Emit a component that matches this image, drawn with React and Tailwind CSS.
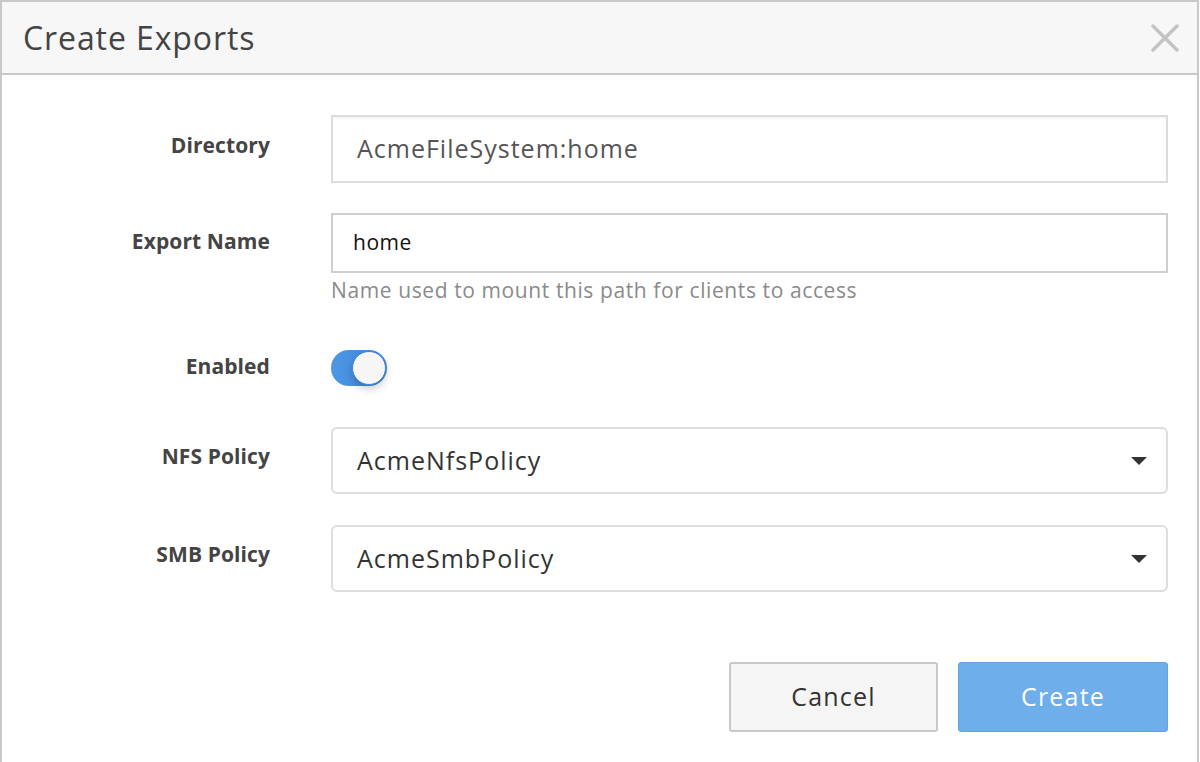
import { useState } from "react";

const font = { fontFamily: "'Open Sans', Lato, sans-serif" };

const Caret = () => (
  <svg width="16" height="8" viewBox="0 0 16 8" className="shrink-0">
    <path d="M0 0 H16 L8 8 Z" fill="#333" />
  </svg>
);

const Row = ({ label, labelClass = "", className = "", children }) => (
  <div className={`flex ${className}`}>
    <div
      className={`w-[268px] shrink-0 text-right text-[21px] leading-[24px] font-bold tracking-[0.1px] text-[#444] ${labelClass}`}
    >
      {label}
    </div>
    <div className="ml-[61px] w-[837px]">{children}</div>
  </div>
);

const App = () => {
  const [enabled, setEnabled] = useState(true);

  return (
    <div
      className="h-[762px] w-[1199px] overflow-hidden border-x-2 border-t-2 border-[#c8c8c8] bg-white"
      style={font}
    >
      <div className="flex h-[73px] items-center justify-between border-b-2 border-[#c8c8c8] bg-[#f7f7f7] pl-[21px] pr-[18px]">
        <h1 className="text-[32px] leading-none tracking-[0.9px] text-[#444]">
          Create Exports
        </h1>
        <button type="button" className="cursor-pointer">
          <svg width="28" height="28" viewBox="0 0 28 28">
            <path
              d="M2 2 L26 26 M26 2 L2 26"
              stroke="#c4c4c4"
              strokeWidth="3.5"
              strokeLinecap="round"
            />
          </svg>
        </button>
      </div>

      <div className="pt-[40px]">
        <Row label="Directory" labelClass="pt-[18px]">
          <div className="flex h-[68px] items-center border-2 border-[#dcdcdc] pl-[24px] text-[25px] tracking-[1px] text-[#555] shadow-[inset_0_2px_2px_rgba(0,0,0,0.04)]">
            AcmeFileSystem:home
          </div>
        </Row>

        <Row label="Export Name" labelClass="pt-[16px]" className="mt-[30px]">
          <div className="flex h-[60px] items-center border-2 border-[#cfcfcf] pl-[20px] text-[21px] tracking-[0.5px] text-[#111]">
            home
          </div>
          <p className="mt-[5px] text-[21px] leading-[24px] tracking-[0.6px] text-[#8a8a8a]">
            Name used to mount this path for clients to access
          </p>
        </Row>

        <Row label="Enabled" labelClass="pt-[4px]" className="mt-[48px]">
          <button
            type="button"
            onClick={() => setEnabled(!enabled)}
            className={`relative flex h-[36px] w-[56px] items-center rounded-full ${
              enabled
                ? "bg-gradient-to-r from-[#4d97e6] to-[#3f86d8]"
                : "bg-[#ddd]"
            }`}
          >
            <span
              className={`absolute top-[1px] h-[34px] w-[34px] rounded-full border border-[#3f86d8] bg-[#f6f6f6] shadow-[0_4px_8px_rgba(0,0,0,0.2)] ${
                enabled ? "right-[1px]" : "left-[1px]"
              }`}
            />
          </button>
        </Row>

        <Row label="NFS Policy" labelClass="pt-[17px]" className="mt-[41px]">
          <div className="flex h-[67px] items-center justify-between rounded-[6px] border-2 border-[#dedede] pl-[24px] pr-[19px] text-[25px] tracking-[1px] text-[#333]">
            <span>AcmeNfsPolicy</span>
            <Caret />
          </div>
        </Row>

        <Row label="SMB Policy" labelClass="pt-[17px]" className="mt-[31px]">
          <div className="flex h-[67px] items-center justify-between rounded-[6px] border-2 border-[#dedede] pl-[24px] pr-[19px] text-[25px] tracking-[1px] text-[#333]">
            <span>AcmeSmbPolicy</span>
            <Caret />
          </div>
        </Row>

        <div className="mt-[70px] flex w-[1166px] justify-end gap-[20px]">
          <button
            type="button"
            className="h-[70px] w-[209px] rounded-[3px] border-2 border-[#c8c8c8] bg-[#f5f5f5] text-[25px] tracking-[1.2px] text-[#333]"
          >
            Cancel
          </button>
          <button
            type="button"
            className="h-[70px] w-[210px] rounded-[3px] border border-[#63a4e4] bg-[#6eaeea] text-[25px] tracking-[1.2px] text-white"
          >
            Create
          </button>
        </div>
      </div>
    </div>
  );
};

export default App;
